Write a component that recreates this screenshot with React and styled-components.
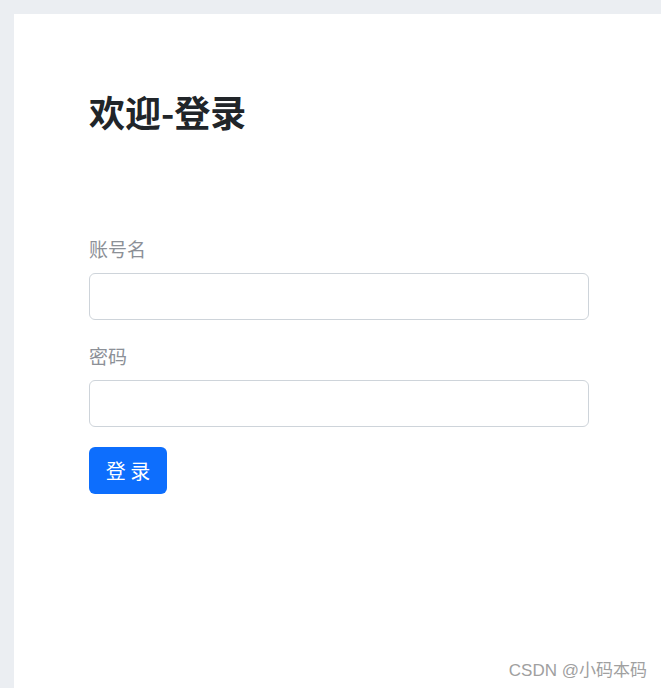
import React from 'react';
import styled, { createGlobalStyle } from 'styled-components';

const GlobalStyle = createGlobalStyle`
  html, body {
    margin: 0;
    padding: 0;
    background: #ebeef2;
    font-family: "Liberation Sans", "Noto Sans CJK SC", sans-serif;
  }
`;

export default function App() {
  return (
    <>
      <GlobalStyle />
      <Page>
        <Card>
          <Title>欢迎-登录</Title>
          <Form onSubmit={(e) => e.preventDefault()}>
            <Field $spacing={22}>
              <Label>账号名</Label>
              <Input type="text" />
            </Field>
            <Field $spacing={20}>
              <Label>密码</Label>
              <Input type="password" />
            </Field>
            <Button type="submit">登 录</Button>
          </Form>
          <Watermark>CSDN @小码本码</Watermark>
        </Card>
      </Page>
    </>
  );
}

const Page = styled.div`
  padding: 14px 0 0 14px;
  height: 688px;
  box-sizing: border-box;
  overflow: hidden;
`;

const Card = styled.div`
  position: relative;
  background: #fff;
  height: 100%;
  box-sizing: border-box;
  padding: 76px 0 0 75px;
`;

const Title = styled.h1`
  margin: 0;
  font-size: 36px;
  line-height: 42px;
  font-weight: 700;
  color: #212529;
  font-family: "Noto Sans CJK SC", sans-serif;
`;

const Form = styled.form`
  display: flex;
  flex-direction: column;
  align-items: flex-start;
  margin-top: 103px;
  width: 500px;
`;

const Field = styled.div`
  display: flex;
  flex-direction: column;
  gap: 10px;
  width: 100%;
  margin-bottom: ${(p) => p.$spacing}px;
`;

const Label = styled.label`
  font-size: 19px;
  line-height: 28px;
  color: #8c9097;
  font-family: "Noto Sans CJK SC", sans-serif;
`;

const Input = styled.input`
  width: 100%;
  height: 47px;
  box-sizing: border-box;
  border: 1px solid #ced4da;
  border-radius: 6px;
  padding: 6px 12px;
  font-size: 16px;
  outline: none;
`;

const Button = styled.button`
  width: 78px;
  height: 47px;
  border: none;
  border-radius: 6px;
  background: #0d6efd;
  color: #fff;
  font-size: 20px;
  font-family: "Noto Sans CJK SC", sans-serif;
  cursor: pointer;
`;

const Watermark = styled.div`
  position: absolute;
  right: 14px;
  bottom: 7px;
  font-size: 17px;
  color: #a0a0a0;
  font-family: "Liberation Sans", "Noto Sans CJK SC", sans-serif;
`;
